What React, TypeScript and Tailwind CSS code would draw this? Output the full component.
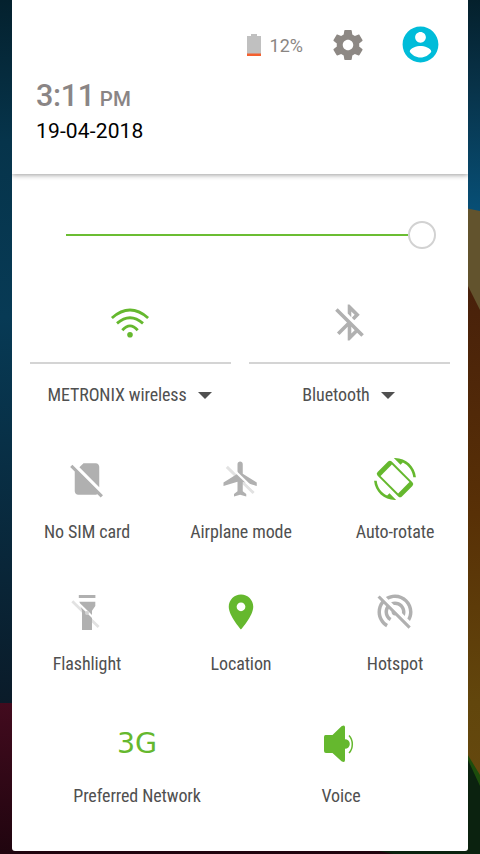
import type { ReactNode } from 'react'

const GREEN = 'text-[#65b82e]'
const GREY = 'text-[#b0b0b0]'

function Icon({ path, className }: { path: string; className: string }) {
  return (
    <svg viewBox="0 0 24 24" fill="currentColor" className={className}>
      <path d={path} />
    </svg>
  )
}

const paths = {
  settings:
    'M19.43 12.98c.04-.32.07-.64.07-.98s-.03-.66-.07-.98l2.11-1.65c.19-.15.24-.42.12-.64l-2-3.46c-.12-.22-.39-.3-.61-.22l-2.49 1c-.52-.4-1.08-.73-1.69-.98l-.38-2.65C14.46 2.18 14.25 2 14 2h-4c-.25 0-.46.18-.49.42l-.38 2.65c-.61.25-1.17.59-1.69.98l-2.49-1c-.23-.09-.49 0-.61.22l-2 3.46c-.13.22-.07.49.12.64l2.11 1.65c-.04.32-.07.65-.07.98s.03.66.07.98l-2.11 1.65c-.19.15-.24.42-.12.64l2 3.46c.12.22.39.3.61.22l2.49-1c.52.4 1.08.73 1.69.98l.38 2.65c.03.24.24.42.49.42h4c.25 0 .46-.18.49-.42l.38-2.65c.61-.25 1.17-.59 1.69-.98l2.49 1c.23.09.49 0 .61-.22l2-3.46c.12-.22.07-.49-.12-.64l-2.11-1.65zM12 15.5c-1.93 0-3.5-1.57-3.5-3.5s1.57-3.5 3.5-3.5 3.5 1.57 3.5 3.5-1.57 3.5-3.5 3.5z',
  account:
    'M12 2C6.48 2 2 6.48 2 12s4.48 10 10 10 10-4.48 10-10S17.52 2 12 2zm0 3c1.66 0 3 1.34 3 3s-1.34 3-3 3-3-1.34-3-3 1.34-3 3-3zm0 14.2c-2.5 0-4.71-1.28-6-3.22.03-1.99 4-3.08 6-3.08 1.99 0 5.97 1.09 6 3.08-1.29 1.94-3.5 3.22-6 3.22z',
  bluetoothOff:
    'M13 5.83l1.88 1.88-1.6 1.6 1.41 1.41 3.02-3.02L12 2h-1v5.03l2 2v-3.2zM5.41 4L4 5.41 10.59 12 5 17.59 6.41 19 11 14.41V22h1l4.29-4.29 2.3 2.29L20 18.59 5.41 4zM13 18.17v-3.76l1.88 1.88L13 18.17z',
  noSim:
    'M18.99 5c0-1.1-.89-2-1.99-2h-7L7.66 5.34 19 16.68 18.99 5zM3.65 3.88L2.38 5.15 5 7.77V19c0 1.1.9 2 2 2h10.01c.35 0 .67-.1.96-.26l1.88 1.88 1.27-1.27L3.65 3.88z',
  location:
    'M12 2C8.13 2 5 5.13 5 9c0 5.25 7 13 7 13s7-7.75 7-13c0-3.87-3.13-7-7-7zm0 9.5c-1.38 0-2.5-1.12-2.5-2.5s1.12-2.5 2.5-2.5 2.5 1.12 2.5 2.5-1.12 2.5-2.5 2.5z',
  hotspotOff:
    'M17.56 14.24c.28-.69.44-1.45.44-2.24 0-3.31-2.69-6-6-6-.79 0-1.55.16-2.24.44l1.62 1.62c.2-.03.41-.06.62-.06 2.21 0 4 1.79 4 4 0 .21-.02.42-.05.63l1.61 1.61zM12 4c4.42 0 8 3.58 8 8 0 1.35-.35 2.62-.95 3.74l1.47 1.47C21.46 15.69 22 13.91 22 12c0-5.52-4.48-10-10-10-1.91 0-3.69.55-5.21 1.47l1.46 1.46C9.37 4.34 10.65 4 12 4zM3.27 2.5L2 3.77l2.1 2.1C2.79 7.57 2 9.69 2 12c0 3.7 2.01 6.92 4.99 8.65l1-1.73C5.61 17.53 4 14.96 4 12c0-1.76.57-3.38 1.53-4.69l1.43 1.44C6.36 9.68 6 10.8 6 12c0 2.22 1.21 4.15 3 5.19l1-1.74c-1.19-.7-2-1.97-2-3.45 0-.65.17-1.25.44-1.79l1.58 1.58L10 12c0 1.1.9 2 2 2l.21-.02.01.01 7.51 7.51L21 20.23 4.27 3.5l-1-1z',
}

function Battery() {
  return (
    <svg viewBox="0 0 14 22" className="h-[22px] w-[14px]">
      <path d="M0 2h4V0h6v2h4v18H0z" fill="#c0c0c0" />
      <path d="M0 19.5h14V22H0z" fill="#f4602f" />
    </svg>
  )
}

function Wifi() {
  return (
    <svg viewBox="0 0 40 40" className={`size-10 ${GREEN}`} fill="none" stroke="currentColor" strokeWidth="2.8">
      <path d="M1.9 15Q20 -0.9 38.1 15" />
      <path d="M7 20.4Q20 9 33 20.4" />
      <path d="M12.3 27.3Q20 18.6 27.7 27.3" />
      <circle cx="20" cy="31.7" r="2.8" fill="currentColor" stroke="none" />
    </svg>
  )
}

function AirplaneOff() {
  return (
    <svg viewBox="0 0 24 24" className={`-ml-px size-[42px] ${GREY}`}>
      <path d="M3.9 5.1L19.2 20" stroke="#e2e2e2" strokeWidth="1.7" />
      <path
        d="M21 16v-2l-8-5V3.5c0-.83-.67-1.5-1.5-1.5S10 2.67 10 3.5V9l-8 5v2l8-2.5V19l-2 1.5V22l3.5-1 3.5 1v-1.5L13 19v-5.5l8 2.5z"
        fill="currentColor"
      />
      <path d="M8.4 7.3L19.4 18" stroke="#fff" strokeWidth="1.3" />
    </svg>
  )
}

function AutoRotate() {
  return (
    <svg viewBox="0 0 42 42" className={`size-[42px] ${GREEN}`} fill="currentColor">
      <g transform="scale(1.75)">
        <path d="M16.48 2.52c3.27 1.55 5.61 4.72 5.97 8.48h1.5C23.44 4.84 18.29 0 12 0l-.66.03 3.81 3.81 1.33-1.32z" />
        <path d="M7.52 21.48C4.25 19.94 1.91 16.76 1.55 13H.05C.56 19.16 5.71 24 12 24l.66-.03-3.81-3.81-1.33 1.32z" />
      </g>
      <g transform="rotate(45 21 21)">
        <rect x="3.8" y="11" width="34.4" height="20" rx="2.6" />
        <rect x="8.6" y="13" width="24.8" height="16" fill="#fff" />
      </g>
    </svg>
  )
}

function FlashlightOff() {
  return (
    <svg viewBox="0 0 40 40" className={`size-10 ${GREY}`} fill="currentColor">
      <path d="M5.3 9.3L31.6 35" stroke="#e2e2e2" strokeWidth="2.8" />
      <path d="M11.8 3h16.6v3H11.8zM12.3 9.7h16v4.2L25 18.7V38H15V18.7z" />
      <path d="M9.4 9.2L27.6 27" stroke="#fff" strokeWidth="2.2" />
      <circle cx="20" cy="21" r="2" fill="#d2d2d2" />
    </svg>
  )
}

function Speaker() {
  return (
    <svg viewBox="0 0 40 40" className={`size-10 ${GREEN}`} fill="currentColor">
      <path d="M4.5 11h7L20.5 2.2q3.5-1.8 3.5 1V15.2a4 4 0 0 1 0 9.6V36q0 3-3.5 1.2L11.5 29H5q-2 0-2-2V13q0-2 1.5-2z" />
      <path d="M28 11.5c4.4 4.6 4.4 13 0 17.6" fill="none" stroke="currentColor" strokeWidth="1.5" />
    </svg>
  )
}

// Dimmed home screen that shows around the panel
function Wallpaper() {
  return (
    <svg viewBox="0 0 480 854" className="absolute inset-0 h-[854px] w-[480px]">
      <defs>
        <linearGradient id="left" x1="0" y1="0" x2="0" y2="1">
          <stop offset="0" stopColor="#04212e" />
          <stop offset="0.2" stopColor="#06344b" />
          <stop offset="0.45" stopColor="#073a55" />
          <stop offset="1" stopColor="#0a1b29" />
        </linearGradient>
        <linearGradient id="maroon" x1="0" y1="0" x2="0" y2="1">
          <stop offset="0" stopColor="#420b1e" />
          <stop offset="1" stopColor="#20050f" />
        </linearGradient>
        <linearGradient id="right" x1="0" y1="0" x2="0" y2="1">
          <stop offset="0" stopColor="#04202c" />
          <stop offset="0.4" stopColor="#083248" />
          <stop offset="1" stopColor="#074f76" />
        </linearGradient>
        <linearGradient id="brown" x1="0" y1="0" x2="0" y2="1">
          <stop offset="0" stopColor="#471f0b" />
          <stop offset="0.45" stopColor="#583006" />
          <stop offset="0.8" stopColor="#62460c" />
          <stop offset="1" stopColor="#66490f" />
        </linearGradient>
      </defs>
      <rect width="240" height="704" fill="url(#left)" />
      <rect y="703" width="480" height="151" fill="url(#maroon)" />
      <rect x="240" width="240" height="212" fill="url(#right)" />
      <path d="M460 207l20 4v110h-20z" fill="#62532d" />
      <path d="M460 270l20 40v500h-20z" fill="url(#brown)" />
      <path d="M460 742l20 33v79h-20z" fill="#1d4d0c" />
      <path d="M375 850h93v-90l12 26v68h-87z" fill="#0b220f" />
    </svg>
  )
}

function Label({ children }: { children: ReactNode }) {
  return (
    <span className="whitespace-nowrap font-['Roboto_Condensed',Roboto,sans-serif] text-[18px] leading-6 tracking-[-0.1px] font-stretch-condensed text-[#505050]">
      {children}
    </span>
  )
}

function WideTile({ icon, label }: { icon: ReactNode; label: string }) {
  return (
    <div className="flex w-[201px] flex-col">
      <div className="flex h-[81px] items-center justify-center border-b-2 border-[#d4d4d4] pr-px">{icon}</div>
      <div className="mt-[19px] flex items-center justify-center gap-[11px] pr-[2px]">
        <Label>{label}</Label>
        <span className="border-x-[7.5px] border-t-[7.5px] border-x-transparent border-t-[#505050]" />
      </div>
    </div>
  )
}

function Tile({ icon, label }: { icon: ReactNode; label: string }) {
  return (
    <div className="flex h-[132px] flex-col items-center">
      <div className="flex h-[42px] items-center justify-center">{icon}</div>
      <div className="mt-5">
        <Label>{label}</Label>
      </div>
    </div>
  )
}

const tiles = [
  { label: 'No SIM card', icon: <Icon path={paths.noSim} className={`size-[42px] ${GREY}`} /> },
  { label: 'Airplane mode', icon: <AirplaneOff /> },
  { label: 'Auto-rotate', icon: <AutoRotate /> },
  { label: 'Flashlight', icon: <div className="pt-[2px]"><FlashlightOff /></div> },
  { label: 'Location', icon: <Icon path={paths.location} className={`mt-[2px] size-[42px] ${GREEN}`} /> },
  { label: 'Hotspot', icon: <Icon path={paths.hotspotOff} className={`mt-[2px] size-[42px] ${GREY}`} /> },
]

function App() {
  return (
    <div className="relative h-[854px] w-[480px] overflow-hidden font-[Roboto,sans-serif]">
      <Wallpaper />
      <main className="relative mx-3 h-[851px] overflow-hidden rounded-b-[3px] bg-white">
        <header className="h-[174px] px-6 shadow-[0_1px_5px_rgba(0,0,0,0.4)]">
          <div className="flex h-[78px] items-center justify-end pt-[11px]">
            <Battery />
            <span className="ml-[9px] pt-px text-[18px] text-[#8a8683]">12%</span>
            <Icon path={paths.settings} className="ml-[27px] size-9 text-[#8d8884]" />
            <Icon path={paths.account} className="mr-[2.5px] ml-[32.5px] size-[43px] text-[#00bcd9]" />
          </div>
          <div className="flex items-baseline gap-[5px] font-medium leading-9 text-[#8a8585]">
            <span className="text-[30.5px] tracking-[-0.3px]">3:11</span>
            <span className="text-[20.5px]">PM</span>
          </div>
          <p className="-mt-[3px] text-[21px] leading-[34px] tracking-[0.15px] text-black">19-04-2018</p>
        </header>

        <div className="mt-[47px] flex h-7 items-center pr-8 pl-[54px]">
          <div className="h-[2px] flex-1 bg-[#6bbd33]" />
          <div className="size-7 rounded-full border-2 border-[#d2d2d2] bg-white" />
        </div>

        <div className="mt-[34px] flex gap-[18px] px-[18px]">
          <WideTile icon={<Wifi />} label="METRONIX wireless" />
          <WideTile
            icon={<Icon path={paths.bluetoothOff} className={`size-[43px] ${GREY}`} />}
            label="Bluetooth"
          />
        </div>

        <div className="mt-[51px] grid grid-cols-[114px_114px_114px] gap-x-10 px-[18px]">
          {tiles.map((tile) => (
            <Tile key={tile.label} {...tile} />
          ))}
        </div>

        <div className="grid grid-cols-[204px_204px] pl-[23px]">
          <Tile
            icon={<span className={`pt-[3px] font-['DejaVu_Sans',sans-serif] text-[28.5px] ${GREEN}`}>3G</span>}
            label="Preferred Network"
          />
          <Tile icon={<div className="pt-px"><Speaker /></div>} label="Voice" />
        </div>
      </main>
    </div>
  )
}

export default App
